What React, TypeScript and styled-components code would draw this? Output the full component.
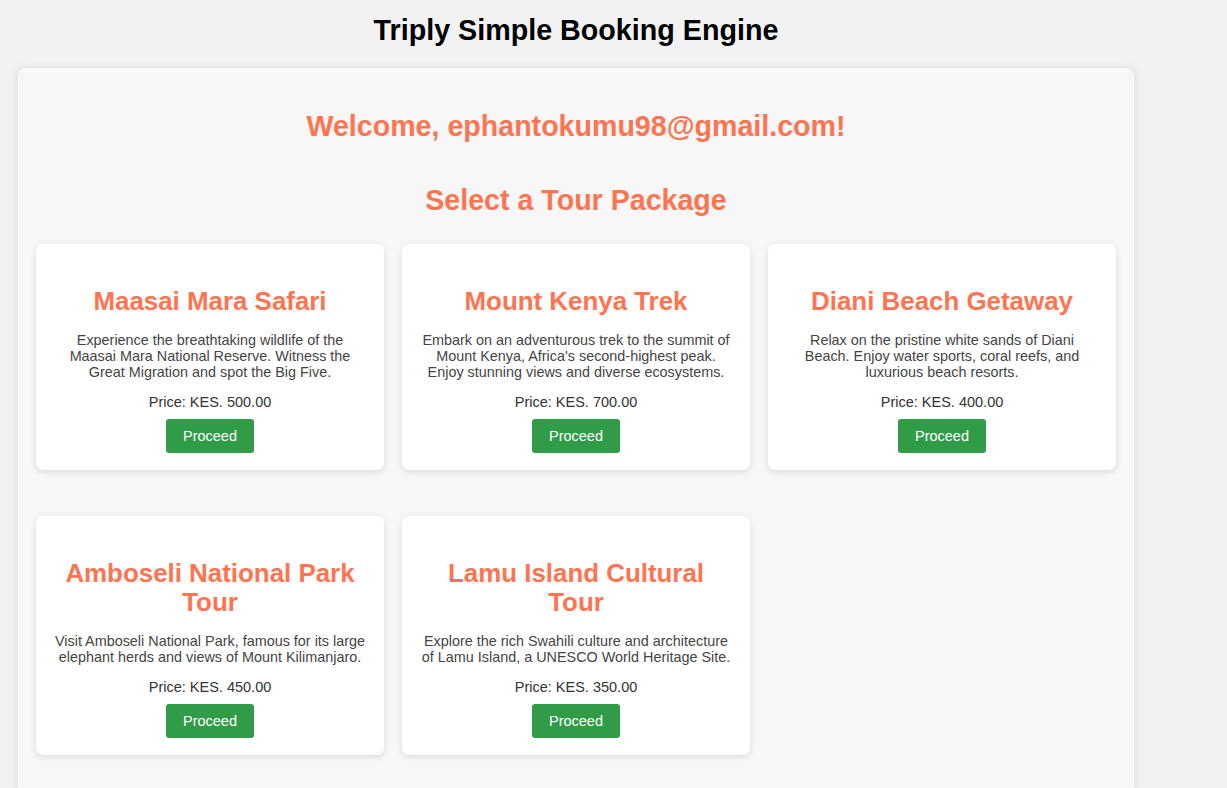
import React from "react";
import styled, { createGlobalStyle } from "styled-components";

const GlobalStyle = createGlobalStyle`
  html, body {
    margin: 0;
    padding: 0;
    background: #f2f2f2;
    font-family: "Liberation Sans", Arial, Helvetica, sans-serif;
  }
`;

const Page = styled.div`
  width: 1116px;
  padding: 0 18px;
`;

const Title = styled.h1`
  margin: 0;
  padding: 14px 0 21px;
  font-size: 28.7px;
  line-height: 33px;
  font-weight: 700;
  color: #000;
  text-align: center;
`;

const Panel = styled.div`
  background: #f7f7f7;
  border-radius: 8px;
  box-shadow: 0 0 10px rgba(0, 0, 0, 0.1);
  padding: 42px 18px 40px;
`;

const Heading = styled.h2`
  margin: 0;
  font-size: 28.6px;
  line-height: 33px;
  font-weight: 700;
  color: #fe7451;
  text-align: center;
  & + & {
    margin-top: 41px;
  }
`;

const Grid = styled.div`
  margin-top: 27px;
  display: grid;
  grid-template-columns: repeat(3, 348px);
  column-gap: 18px;
  row-gap: 46px;
  align-items: start;
`;

const Card = styled.div`
  background: #fff;
  border-radius: 7px;
  box-shadow: 0 2px 6px rgba(0, 0, 0, 0.12);
  padding: 18px 18px 17px;
  display: flex;
  flex-direction: column;
  align-items: center;
  text-align: center;
`;

const CardTitle = styled.h3`
  margin: 25px 0 15px;
  font-size: 25.9px;
  line-height: 29.5px;
  font-weight: 700;
  color: #fe7451;
`;

const Desc = styled.p`
  margin: 0 0 14px;
  font-size: 14.4px;
  line-height: 16px;
  color: #444;
`;

const Price = styled.p`
  margin: 0 0 9px;
  font-size: 14.5px;
  line-height: 16px;
  color: #333;
`;

const Button = styled.button`
  width: 88px;
  height: 34px;
  border: none;
  border-radius: 3px;
  background: #319c47;
  color: #fff;
  font-family: inherit;
  font-size: 14.5px;
  cursor: pointer;
`;

const tours = [
  {
    title: "Maasai Mara Safari",
    desc: "Experience the breathtaking wildlife of the Maasai Mara National Reserve. Witness the Great Migration and spot the Big Five.",
    price: "500.00",
  },
  {
    title: "Mount Kenya Trek",
    desc: "Embark on an adventurous trek to the summit of Mount Kenya, Africa's second-highest peak. Enjoy stunning views and diverse ecosystems.",
    price: "700.00",
  },
  {
    title: "Diani Beach Getaway",
    desc: "Relax on the pristine white sands of Diani Beach. Enjoy water sports, coral reefs, and luxurious beach resorts.",
    price: "400.00",
  },
  {
    title: "Amboseli National Park Tour",
    desc: "Visit Amboseli National Park, famous for its large elephant herds and views of Mount Kilimanjaro.",
    price: "450.00",
  },
  {
    title: "Lamu Island Cultural Tour",
    desc: "Explore the rich Swahili culture and architecture of Lamu Island, a UNESCO World Heritage Site.",
    price: "350.00",
  },
];

export default function App() {
  return (
    <>
      <GlobalStyle />
      <Page>
        <Title>Triply Simple Booking Engine</Title>
        <Panel>
          <Heading>Welcome, ephantokumu98@gmail.com!</Heading>
          <Heading>Select a Tour Package</Heading>
          <Grid>
            {tours.map((t) => (
              <Card key={t.title}>
                <CardTitle>{t.title}</CardTitle>
                <Desc>{t.desc}</Desc>
                <Price>Price: KES. {t.price}</Price>
                <Button>Proceed</Button>
              </Card>
            ))}
          </Grid>
        </Panel>
      </Page>
    </>
  );
}
